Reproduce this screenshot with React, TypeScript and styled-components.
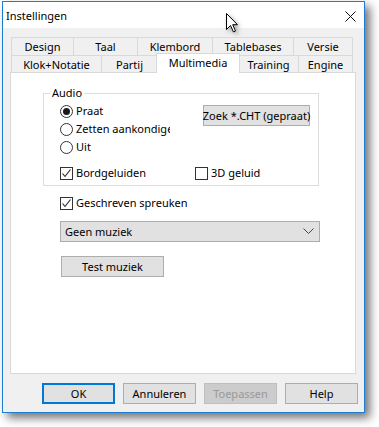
import styled, { createGlobalStyle } from 'styled-components';

const GlobalStyle = createGlobalStyle`
  html, body {
    margin: 0;
    padding: 0;
    background: #ffffff;
  }
  body {
    font-family: "Noto Sans", "DejaVu Sans", sans-serif;
    font-size: 11px;
    color: #000000;
  }
  * {
    box-sizing: border-box;
  }
`;

const Page = styled.div`
  position: relative;
  width: 379px;
  height: 427px;
  padding: 1px 0 0 2px;
  overflow: hidden;
`;

const Window = styled.div`
  width: 363px;
  height: 412px;
  border: 1px solid #1a7fd4;
  background: #f0f0f0;
  box-shadow: 5px 5px 9px rgba(0, 0, 0, 0.55);
  display: flex;
  flex-direction: column;
`;

const TitleBar = styled.div`
  height: 26px;
  background: #ffffff;
  display: flex;
  align-items: center;
  justify-content: space-between;
  padding: 0 8px 0 3px;
`;

const Title = styled.span`
  font-size: 11px;
  line-height: 16px;
  margin-top: 1px;
`;

const CloseIcon = styled.svg`
  width: 11px;
  height: 11px;
  margin-top: 2px;
`;

const Body = styled.div`
  flex: 1;
  display: flex;
  flex-direction: column;
  padding: 9px 8px 0 7px;
  min-height: 0;
`;

const TabStrip = styled.div`
  display: flex;
  flex-direction: column;
  margin: 0 2px 0 1px;
`;

const TabRow = styled.div<{ $height: number }>`
  display: flex;
  height: ${({ $height }) => $height}px;
`;

const Tab = styled.div<{ $width: number; $last?: boolean }>`
  width: ${({ $width }) => $width}px;
  flex: none;
  display: flex;
  align-items: center;
  justify-content: center;
  border-top: 1px solid #d9d9d9;
  border-left: 1px solid #d9d9d9;
  border-right: ${({ $last }) => ($last ? '1px solid #d9d9d9' : 'none')};
  background: #f0f0f0;
  white-space: nowrap;
  line-height: 15px;
`;

const ActiveTab = styled.div<{ $width: number }>`
  position: relative;
  z-index: 1;
  width: ${({ $width }) => $width + 3}px;
  flex: none;
  margin: -2px -2px -1px -1px;
  display: flex;
  align-items: center;
  justify-content: center;
  padding-bottom: 2px;
  border: 1px solid #d9d9d9;
  border-bottom: none;
  background: #ffffff;
  white-space: nowrap;
  line-height: 15px;
`;

const Panel = styled.div`
  flex: 1;
  border: 1px solid #d9d9d9;
  background: #ffffff;
  display: flex;
  flex-direction: column;
  align-items: flex-start;
  padding: 12px 0 0 32px;
`;

const GroupBox = styled.fieldset`
  width: 276px;
  margin: 0;
  padding: 0;
  border: 1px solid #dcdcdc;
  min-width: 0;
`;

const Legend = styled.legend`
  margin-left: 6px;
  padding: 0 2px;
  line-height: 16px;
`;

const GroupBody = styled.div`
  padding: 1px 0 3px 16px;
  display: flex;
  flex-direction: column;
`;

const GroupTop = styled.div`
  display: flex;
  align-items: flex-start;
`;

const RadioColumn = styled.div`
  width: 110px;
  overflow: hidden;
  display: flex;
  flex-direction: column;
`;

const OptionRow = styled.div<{ $width?: number }>`
  height: 18px;
  display: flex;
  align-items: center;
  gap: 3px;
  white-space: nowrap;
  line-height: 16px;
  flex: none;
  width: ${({ $width }) => ($width ? `${$width}px` : 'auto')};
`;

const RadioCircle = styled.span<{ $checked?: boolean }>`
  width: 13px;
  height: 13px;
  flex: none;
  border: 1px solid #333333;
  border-radius: 50%;
  background: #ffffff;
  display: flex;
  align-items: center;
  justify-content: center;

  &::after {
    content: '';
    width: 7px;
    height: 7px;
    border-radius: 50%;
    background: ${({ $checked }) => ($checked ? '#1a1a1a' : 'transparent')};
  }
`;

const CheckBox = styled.span`
  width: 13px;
  height: 13px;
  flex: none;
  border: 1px solid #333333;
  background: #ffffff;
  display: flex;
  align-items: center;
  justify-content: center;
`;

const PushButton = styled.div<{ $width: number; $default?: boolean; $disabled?: boolean }>`
  width: ${({ $width }) => $width}px;
  height: 21px;
  flex: none;
  display: flex;
  align-items: center;
  justify-content: center;
  white-space: nowrap;
  line-height: 16px;
  background: ${({ $disabled }) => ($disabled ? '#cccccc' : '#e1e1e1')};
  color: ${({ $disabled }) => ($disabled ? '#9a9a9a' : '#000000')};
  border: ${({ $default, $disabled }) =>
    $default ? '2px solid #0078d7' : $disabled ? '1px solid #bfbfbf' : '1px solid #adadad'};
`;

const ZoekButton = styled(PushButton)`
  margin: 3px 0 0 33px;
`;

const CheckRow = styled.div`
  display: flex;
  margin-top: 8px;
`;

const Spreuken = styled(OptionRow)`
  margin: 8px 0 0 17px;
`;

const Select = styled.div`
  width: 260px;
  height: 21px;
  margin: 9px 0 0 17px;
  background: #e1e1e1;
  border: 1px solid #adadad;
  display: flex;
  align-items: center;
  justify-content: space-between;
  padding: 0 5px 0 4px;
  line-height: 16px;
`;

const TestButton = styled(PushButton)`
  margin: 14px 0 0 18px;
`;

const Footer = styled.div`
  display: flex;
  justify-content: flex-end;
  gap: 8px;
  padding: 9px 0 8px 0;
  margin-right: -2px;
`;

const Cursor = styled.svg`
  position: absolute;
  left: 226px;
  top: 13px;
  width: 13px;
  height: 20px;
  filter: drop-shadow(2px 2px 2px rgba(0, 0, 0, 0.35));
`;

const CheckMark = () => (
  <svg width="11" height="11" viewBox="0 0 11 11">
    <path d="M1.5 5.5 L4 8.5 L9.5 1.5" fill="none" stroke="#222" strokeWidth="1.1" />
  </svg>
);

const Radio = ({ label, checked }: { label: string; checked?: boolean }) => (
  <OptionRow>
    <RadioCircle $checked={checked} />
    {label}
  </OptionRow>
);

const Check = ({ label, width, checked }: { label: string; width?: number; checked?: boolean }) => (
  <OptionRow $width={width}>
    <CheckBox>{checked && <CheckMark />}</CheckBox>
    {label}
  </OptionRow>
);

const topTabs = [
  { label: 'Design', width: 62 },
  { label: 'Taal', width: 64 },
  { label: 'Klembord', width: 75 },
  { label: 'Tablebases', width: 81 },
  { label: 'Versie', width: 60 },
];

const bottomTabs = [
  { label: 'Klok+Notatie', width: 90 },
  { label: 'Partij', width: 56 },
  { label: 'Multimedia', width: 81, active: true },
  { label: 'Training', width: 60 },
  { label: 'Engine', width: 55 },
];

const App = () => {
  return (
    <>
      <GlobalStyle />
      <Page>
        <Window>
          <TitleBar>
            <Title>Instellingen</Title>
            <CloseIcon viewBox="0 0 11 11">
              <path d="M0.5 0.5 L10.5 10.5 M10.5 0.5 L0.5 10.5" stroke="#111" strokeWidth="1" />
            </CloseIcon>
          </TitleBar>

          <Body>
            <TabStrip>
              <TabRow $height={18}>
                {topTabs.map((t, i) => (
                  <Tab key={t.label} $width={t.width} $last={i === topTabs.length - 1}>
                    {t.label}
                  </Tab>
                ))}
              </TabRow>
              <TabRow $height={17}>
                {bottomTabs.map((t, i) =>
                  t.active ? (
                    <ActiveTab key={t.label} $width={t.width}>
                      {t.label}
                    </ActiveTab>
                  ) : (
                    <Tab key={t.label} $width={t.width} $last={i === bottomTabs.length - 1}>
                      {t.label}
                    </Tab>
                  )
                )}
              </TabRow>
            </TabStrip>

            <Panel>
              <GroupBox>
                <Legend>Audio</Legend>
                <GroupBody>
                  <GroupTop>
                    <RadioColumn>
                      <Radio label="Praat" checked />
                      <Radio label="Zetten aankondigen" />
                      <Radio label="Uit" />
                    </RadioColumn>
                    <ZoekButton $width={107}>Zoek *.CHT (gepraat)</ZoekButton>
                  </GroupTop>
                  <CheckRow>
                    <Check label="Bordgeluiden" width={135} checked />
                    <Check label="3D geluid" />
                  </CheckRow>
                </GroupBody>
              </GroupBox>

              <Spreuken>
                <CheckBox>
                  <CheckMark />
                </CheckBox>
                Geschreven spreuken
              </Spreuken>

              <Select>
                <span>Geen muziek</span>
                <svg width="11" height="7" viewBox="0 0 11 7">
                  <path d="M0.5 0.5 L5.5 5.5 L10.5 0.5" fill="none" stroke="#444" strokeWidth="1" />
                </svg>
              </Select>

              <TestButton $width={103}>Test muziek</TestButton>
            </Panel>

            <Footer>
              <PushButton $width={73} $default>OK</PushButton>
              <PushButton $width={73}>Annuleren</PushButton>
              <PushButton $width={73} $disabled>Toepassen</PushButton>
              <PushButton $width={73}>Help</PushButton>
            </Footer>
          </Body>
        </Window>

        <Cursor viewBox="0 0 13 20">
          <path
            d="M0.5 0.5 L0.5 16.5 L4.5 12.5 L7.5 19 L9.5 18 L6.7 11.7 L11.5 11.7 Z"
            fill="#ffffff"
            stroke="#000000"
            strokeWidth="1"
            strokeLinejoin="miter"
          />
        </Cursor>
      </Page>
    </>
  );
};

export default App;
